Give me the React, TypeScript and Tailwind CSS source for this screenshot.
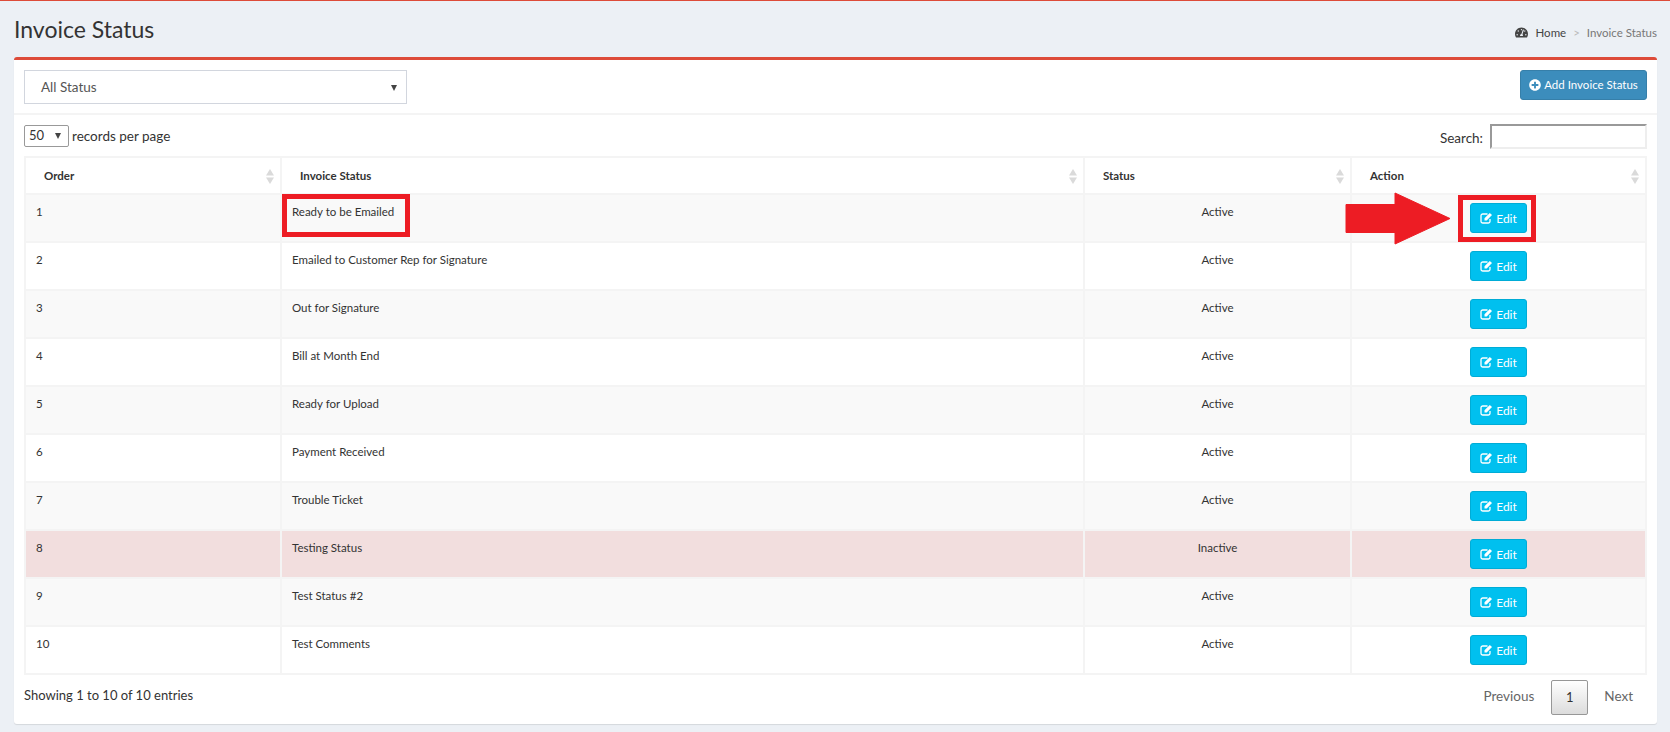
import { FaPlusCircle, FaTachometerAlt } from 'react-icons/fa'

const rows = [
  { order: 1, name: 'Ready to be Emailed', status: 'Active' },
  { order: 2, name: 'Emailed to Customer Rep for Signature', status: 'Active' },
  { order: 3, name: 'Out for Signature', status: 'Active' },
  { order: 4, name: 'Bill at Month End', status: 'Active' },
  { order: 5, name: 'Ready for Upload', status: 'Active' },
  { order: 6, name: 'Payment Received', status: 'Active' },
  { order: 7, name: 'Trouble Ticket', status: 'Active' },
  { order: 8, name: 'Testing Status', status: 'Inactive' },
  { order: 9, name: 'Test Status #2', status: 'Active' },
  { order: 10, name: 'Test Comments', status: 'Active' },
]

function SortIcon() {
  return (
    <svg width="8" height="15" viewBox="0 0 8 15" className="absolute right-[6px] top-[11px]">
      <path d="M4 0 L8 6.5 H0 Z" fill="#dadada" />
      <path d="M4 15 L8 8.5 H0 Z" fill="#dadada" />
    </svg>
  )
}

function Caret() {
  return (
    <svg width="6" height="6" viewBox="0 0 6 6">
      <path d="M0 0 H6 L3 6 Z" fill="#444" />
    </svg>
  )
}

// font awesome 4 style pencil-square, the bundled FaRegEdit is too thin
function EditIcon() {
  return (
    <svg width="13" height="12" viewBox="0 0 13 12" fill="none">
      <path
        d="M10 7 V9.2 A1.8 1.8 0 0 1 8.2 11 H2.8 A1.8 1.8 0 0 1 1 9.2 V3.8 A1.8 1.8 0 0 1 2.8 2 H7.5"
        stroke="white"
        strokeWidth="1.3"
      />
      <path d="M4.5 6.2 L9.8 0.9 L12 3.1 L6.7 8.4 H4.5 Z" fill="white" />
    </svg>
  )
}

function HeaderCell({ label }: { label: string }) {
  return (
    <th className="relative h-[37px] border-2 border-[#f4f4f4] pl-[18px] text-left align-middle text-[11.5px] font-bold text-[#333]">
      {label}
      <SortIcon />
    </th>
  )
}

function App() {
  return (
    <div
      className="h-[732px] overflow-hidden border-t border-[#dd4b39] bg-[#ecf0f5] text-[#333]"
      style={{ fontFamily: 'Lato, "Noto Sans", sans-serif' }}
    >
      <div className="flex h-[56px] items-start justify-between pl-[14px] pr-[13px]">
        <h1 className="mt-[12px] text-[23px] leading-[32px] font-normal text-[#333]">Invoice Status</h1>
        <div className="mt-[23px] flex items-center text-[11.5px] leading-[17px]">
          <FaTachometerAlt className="mr-[8px] text-[13px] text-[#444]" />
          <span className="text-[#444]">Home</span>
          <span className="mx-[7px] text-[#bbb]">&gt;</span>
          <span className="text-[#777]">Invoice Status</span>
        </div>
      </div>

      <div className="relative mr-[13px] ml-[14px] h-[667px] rounded-[3px] border-t-[3px] border-[#dd4b39] bg-white shadow-[0_1px_1px_rgba(0,0,0,0.1)]">
        <div className="flex h-[55px] items-start justify-between border-b-2 border-[#f4f4f4] px-[10px] pt-[10px]">
          <div className="flex h-[34px] w-[383px] items-center justify-between border border-[#d2d6de] pt-[1px] pr-[9px] pl-[16px] text-[13.5px] text-[#555]">
            All Status
            <Caret />
          </div>
          <button className="flex h-[30px] w-[127px] items-center justify-center gap-[3px] rounded-[3px] border border-[#367fa9] bg-[#3c8dbc] text-[11.5px] text-white">
            <FaPlusCircle className="text-[12px]" />
            Add Invoice Status
          </button>
        </div>

        <div className="flex h-[41px] items-start justify-between px-[10px] pt-[9px]">
          <div className="mt-[1px] flex items-center text-[13.5px] text-[#333]">
            <div className="mr-[3px] flex h-[22px] w-[45px] items-center justify-between rounded-[2px] border border-[#999] pr-[7px] pl-[4px] text-[13px]">
              50
              <Caret />
            </div>
            records per page
          </div>
          <div className="flex items-center text-[13.5px]">
            <span className="mr-[7px] pt-[3px]">Search:</span>
            <div className="h-[25px] w-[157px] border-2 border-t-[#999] border-r-[#eee] border-b-[#eee] border-l-[#999]" />
          </div>
        </div>

        <div className="px-[10px]">
          <table className="w-full table-fixed border-collapse border-2 border-[#f4f4f4] text-[11.5px] leading-[17px]">
            <colgroup>
              <col className="w-[256px]" />
              <col className="w-[803px]" />
              <col className="w-[267px]" />
              <col />
            </colgroup>
            <thead>
              <tr>
                <HeaderCell label="Order" />
                <HeaderCell label="Invoice Status" />
                <HeaderCell label="Status" />
                <HeaderCell label="Action" />
              </tr>
            </thead>
            <tbody>
              {rows.map((row) => (
                <tr
                  key={row.order}
                  className={row.status === 'Inactive' ? 'bg-[#f2dede]' : row.order % 2 === 1 ? 'bg-[#f9f9f9]' : 'bg-white'}
                >
                  <td className="h-[48px] border-2 border-[#f4f4f4] px-[10px] pt-[8px] align-top">{row.order}</td>
                  <td className="border-2 border-[#f4f4f4] px-[10px] pt-[8px] align-top">{row.name}</td>
                  <td className="border-2 border-[#f4f4f4] px-[10px] pt-[8px] text-center align-top">{row.status}</td>
                  <td className="border-2 border-[#f4f4f4] px-[10px] text-center align-middle">
                    <button className="inline-flex h-[30px] w-[57px] items-center justify-center gap-[3px] rounded-[3px] border border-[#00acd6] bg-[#00c0ef] text-[12px] text-white">
                      <EditIcon />
                      Edit
                    </button>
                  </td>
                </tr>
              ))}
            </tbody>
          </table>

          <div className="flex items-start justify-between pt-[5px]">
            <div className="pt-[6px] text-[13px] leading-[18px]">Showing 1 to 10 of 10 entries</div>
            <div className="flex items-start text-[13.5px] text-[#666]">
              <span className="mr-[17px] pt-[7px] leading-[18px]">Previous</span>
              <span className="flex h-[35px] w-[37px] items-center justify-center rounded-[2px] border border-[#979797] bg-gradient-to-b from-white to-[#dcdcdc] text-[13px] text-[#333]">
                1
              </span>
              <span className="mr-[14px] ml-[16px] pt-[7px] leading-[18px]">Next</span>
            </div>
          </div>
        </div>

        {/* red callouts drawn over the screenshot */}
        <div className="absolute top-[134px] left-[268px] h-[43px] w-[128px] border-[5px] border-[#ed1c24]" />
        <div className="absolute top-[135px] left-[1444px] h-[47px] w-[78px] border-[5px] border-[#ed1c24]" />
        <svg width="106" height="53" viewBox="0 0 106 53" className="absolute top-[132px] left-[1331px]">
          <path d="M1 12.5 H50 V1 L105 26.5 L50 52 V40.5 H1 Z" fill="#ed1c24" stroke="#ed1c24" strokeLinejoin="round" />
        </svg>
      </div>
    </div>
  )
}

export default App
